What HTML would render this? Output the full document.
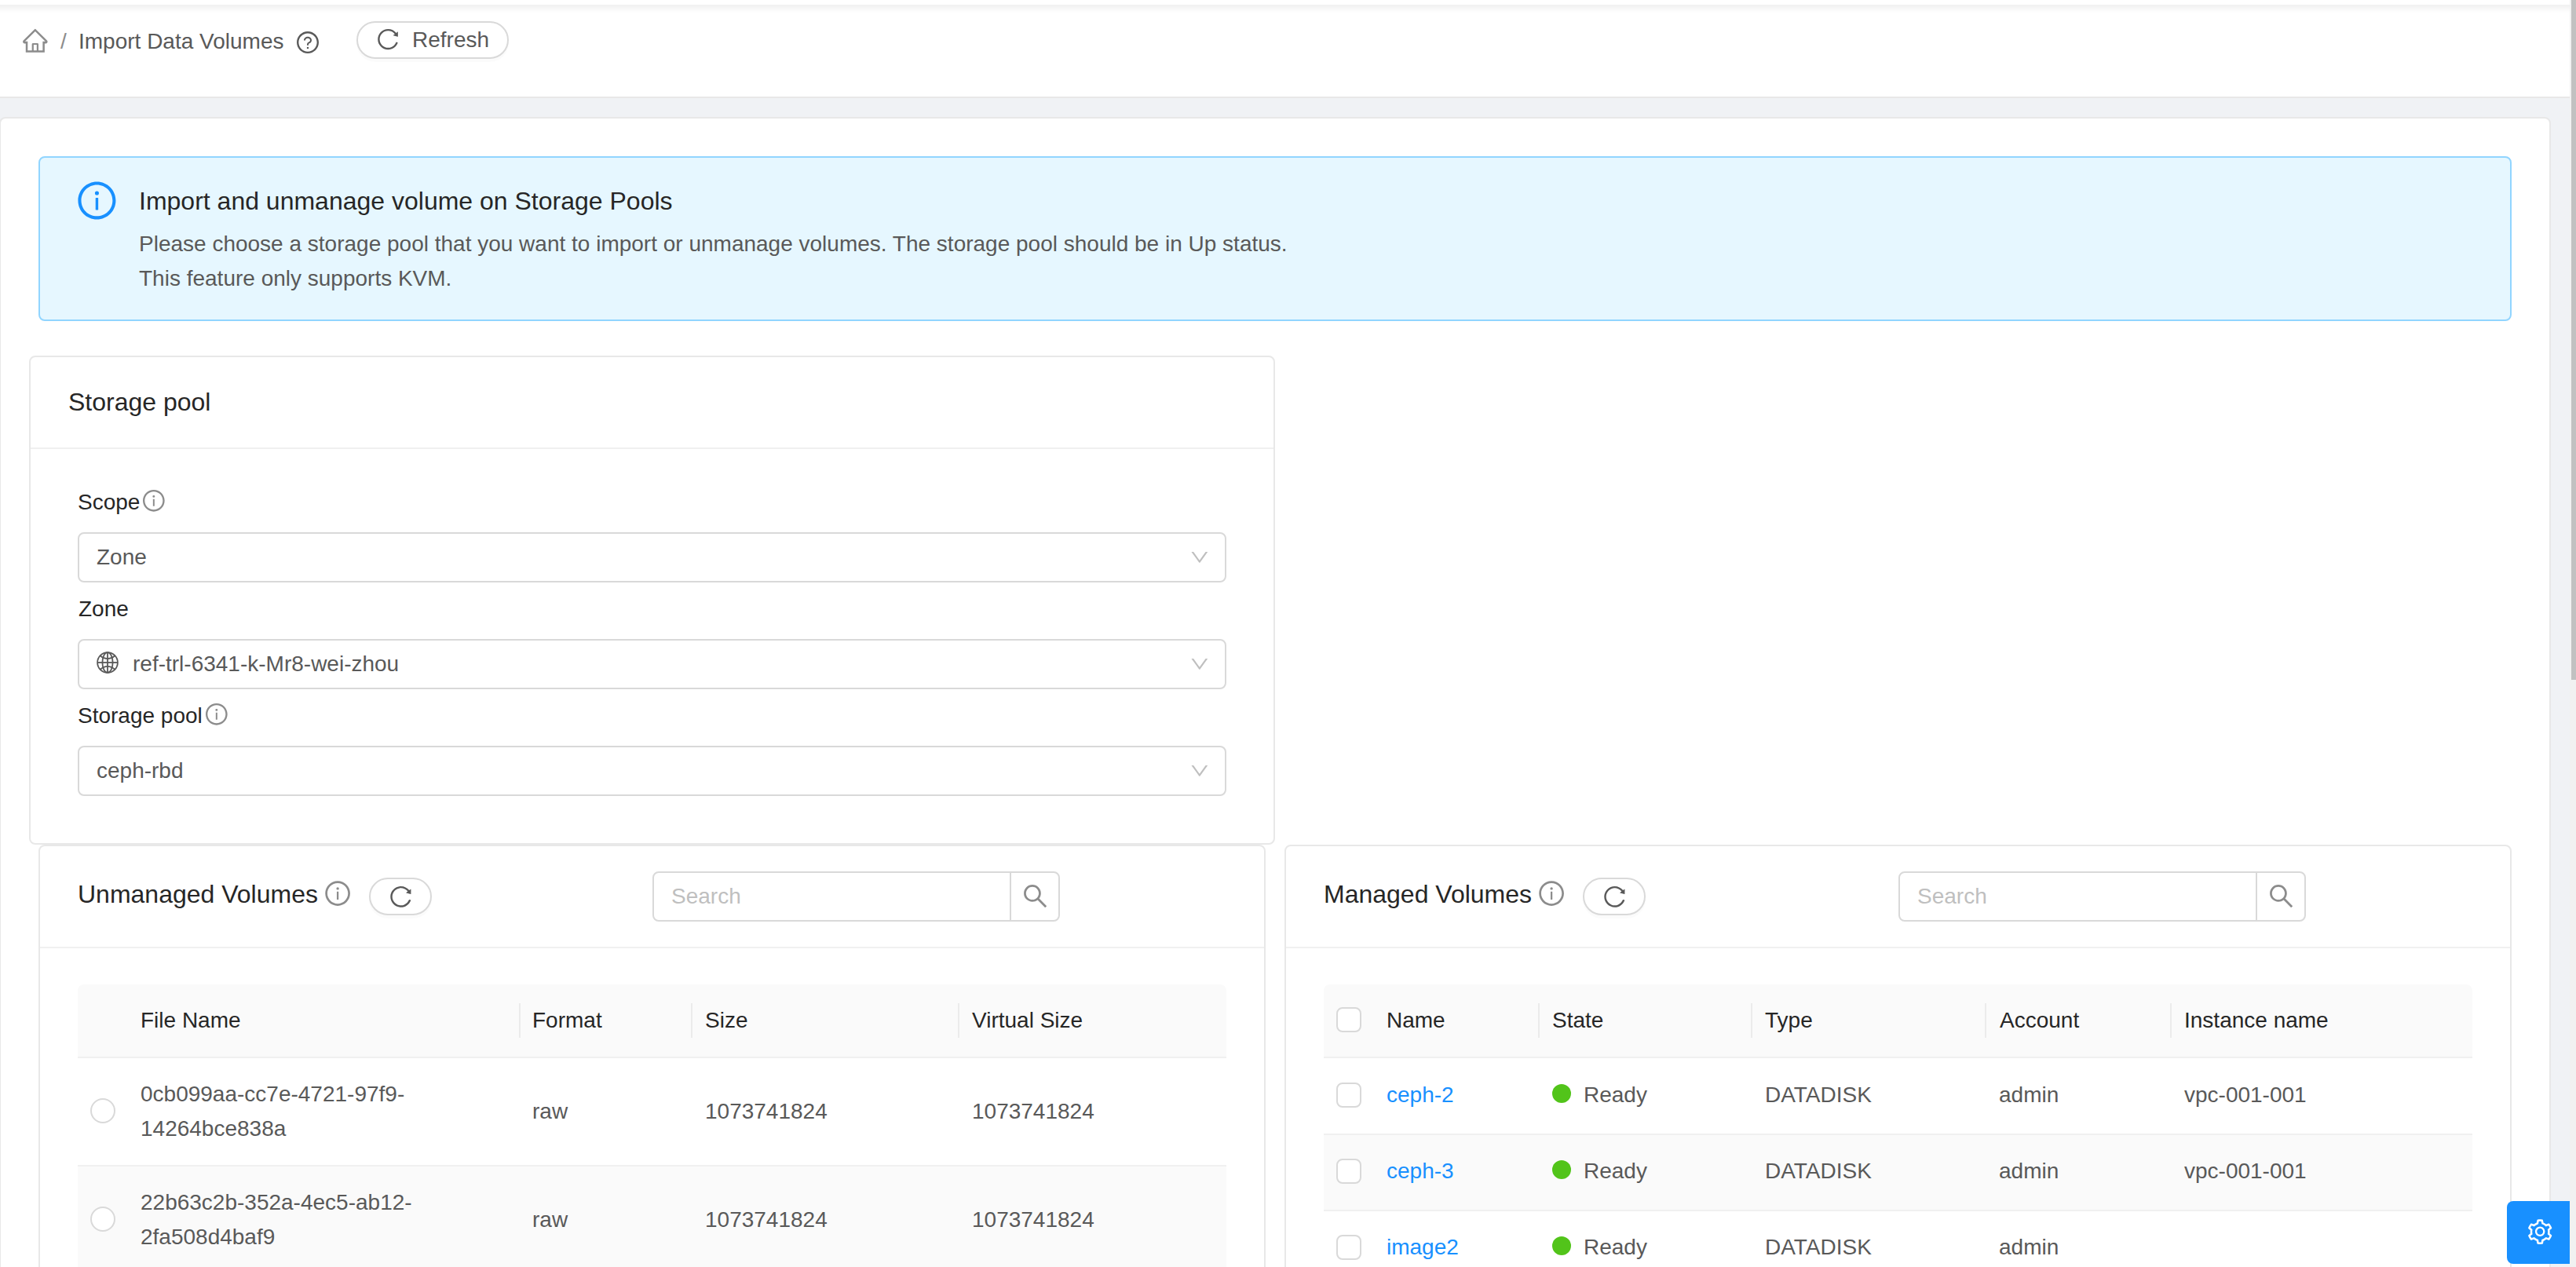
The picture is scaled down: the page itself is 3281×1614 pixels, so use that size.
<!DOCTYPE html>
<html><head><meta charset="utf-8"><style>html,body{margin:0;padding:0}
body{width:3281px;height:1614px;overflow:hidden;position:relative;background:#f0f2f5;font-family:"Liberation Sans",sans-serif}
.a{position:absolute;box-sizing:border-box}
.t{position:absolute;white-space:nowrap;font-size:28px;line-height:28px;color:#595959}
.t32{font-size:32px;line-height:32px;color:#262626}
.dk{color:#262626}
.lnk{color:#1890ff}
svg{position:absolute;display:block}
.sel{position:absolute;box-sizing:border-box;background:#fff;border:2px solid #d9d9d9;border-radius:8px}
.card{position:absolute;box-sizing:border-box;background:#fff;border:2px solid #e8e8e8;border-radius:8px}
.btnr{position:absolute;box-sizing:border-box;background:#fff;border:2px solid #d9d9d9;border-radius:24px;box-shadow:0 4px 0 rgba(0,0,0,.015)}
.chk{position:absolute;box-sizing:border-box;width:32px;height:32px;border:2px solid #d9d9d9;border-radius:8px;background:#fff}
.rad{position:absolute;box-sizing:border-box;width:32px;height:32px;border:2px solid #d9d9d9;border-radius:50%;background:#fff}
.dot{position:absolute;width:24px;height:24px;border-radius:50%;background:#52c41a}
</style></head><body>
<div class="a" style="left:0px;top:0px;width:3273px;height:125px;background:#fff;border-bottom:2px solid #e8e8e8"></div>
<div class="a" style="left:0px;top:6px;width:3273px;height:10px;background:linear-gradient(rgba(0,0,0,.06),rgba(0,0,0,0))"></div>
<svg style="left:26.9px;top:33.8px" width="35.65" height="35.65" viewBox="0 0 1024 1024" fill="#8c8c8c"><path d="M946.5 505L560.1 118.8l-25.9-25.9a31.5 31.5 0 0 0-44.4 0L77.5 505a63.9 63.9 0 0 0-18.8 46c.4 35.2 29.7 63.3 64.9 63.3h42.5V940h691.8V614.3h43.4c17.1 0 33.2-6.7 45.3-18.8a63.6 63.6 0 0 0 18.7-45.3c0-17-6.7-33.1-18.8-45.2zM568 868H456V664h112v204zm217.9-325.7V868H632V640c0-22.1-17.9-40-40-40H432c-22.1 0-40 17.9-40 40v228H238.1V542.3h-96l370-369.7 23.1 23.1L882 542.3h-96.1z"/></svg>
<div class="t" style="left:77px;top:39px;color:#8c8c8c;">/</div>
<div class="t" style="left:100px;top:38.5px;">Import Data Volumes</div>
<svg style="left:376.0px;top:38.0px" width="32.0" height="32.0" viewBox="0 0 1024 1024" fill="#595959"><path d="M512 64C264.6 64 64 264.6 64 512s200.6 448 448 448 448-200.6 448-448S759.4 64 512 64zm0 820c-205.4 0-372-166.6-372-372s166.6-372 372-372 372 166.6 372 372-166.6 372-372 372z"/><path d="M623.6 316.7C593.6 290.4 554 276 512 276s-81.6 14.5-111.6 40.7C369.2 344 352 380.7 352 420v7.6c0 4.4 3.6 8 8 8h48c4.4 0 8-3.6 8-8V420c0-44.1 43.1-80 96-80s96 35.9 96 80c0 31.1-22 59.6-56.1 72.7-21.2 8.1-39.2 22.3-52.1 40.9-13.1 19-19.9 41.8-19.9 64.9V620c0 4.4 3.6 8 8 8h48c4.4 0 8-3.6 8-8v-22.7a48.3 48.3 0 0 1 30.9-44.8c59-22.7 97.1-74.7 97.1-132.5.1-39.3-17.1-76-48.3-103.3zM472 732a40 40 0 1 0 80 0 40 40 0 1 0-80 0z"/></svg>
<div class="btnr" style="left:454px;top:27px;width:194px;height:48px"></div>
<svg style="left:477.8px;top:34.1px" width="32.08" height="32.08" viewBox="0 0 1024 1024" fill="#595959"><path d="M909.1 209.3l-56.4 44.1C775.8 155.1 656.2 92 521.9 92 290 92 102.3 279.5 102 511.5 101.7 743.7 289.8 932 521.9 932c181.3 0 335.8-115 394.6-276.1 1.5-4.2-.7-8.9-4.9-10.3l-56.7-19.5a8 8 0 0 0-10.1 4.8c-1.8 5-3.8 10-5.9 14.9-17.3 41-42.1 77.8-73.7 109.4A344.77 344.77 0 0 1 655.9 829c-42.3 17.900-87.4 27-133.8 27-46.5 0-91.5-9.1-133.8-27A341.5 341.5 0 0 1 279 755.2a342.16 342.16 0 0 1-73.7-109.4c-17.9-42.4-27-87.4-27-133.9s9.1-91.5 27-133.9c17.3-41 42.1-77.8 73.700-109.4 31.6-31.6 68.4-56.4 109.3-73.8 42.3-17.9 87.4-27 133.8-27 46.5 0 91.5 9.1 133.8 27a341.5 341.5 0 0 1 109.3 73.8c9.9 9.9 19.2 20.4 27.8 31.4l-60.2 47a8 8 0 0 0 3 14.1l175.6 43c5 1.2 9.9-2.6 9.9-7.7l.8-180.9c-.1-6.6-7.8-10.3-13-6.2z"/></svg>
<div class="t" style="left:525px;top:36.5px;">Refresh</div>
<div class="card" style="left:-1px;top:149px;width:3250px;height:1500px"></div>
<div class="a" style="left:49px;top:199px;width:3150px;height:210px;background:#e6f7ff;border:2px solid #91d5ff;border-radius:8px"></div>
<svg style="left:95.6px;top:227.6px" width="54.86" height="54.86" viewBox="0 0 1024 1024" fill="#1890ff"><path d="M512 64C264.6 64 64 264.6 64 512s200.6 448 448 448 448-200.6 448-448S759.4 64 512 64zm0 820c-205.4 0-372-166.6-372-372s166.6-372 372-372 372 166.6 372 372-166.6 372-372 372z"/><path d="M464 336a48 48 0 1 0 96 0 48 48 0 1 0-96 0zm72 112h-48c-4.4 0-8 3.6-8 8v272c0 4.4 3.6 8 8 8h48c4.4 0 8-3.6 8-8V456c0-4.4-3.6-8-8-8z"/></svg>
<div class="t t32" style="left:177px;top:240px;">Import and unmanage volume on Storage Pools</div>
<div class="t" style="left:177px;top:297px;">Please choose a storage pool that you want to import or unmanage volumes. The storage pool should be in Up status.</div>
<div class="t" style="left:177px;top:341px;">This feature only supports KVM.</div>
<div class="card" style="left:37px;top:453px;width:1587px;height:623px"></div>
<div class="a" style="left:39px;top:570px;width:1583px;height:2px;background:#f0f0f0"></div>
<div class="t t32" style="left:87px;top:496px;">Storage pool</div>
<div class="t dk" style="left:99px;top:626px;">Scope</div>
<svg style="left:180.2px;top:622.2px" width="31.66" height="31.66" viewBox="0 0 1024 1024" fill="#8c8c8c"><path d="M512 64C264.6 64 64 264.6 64 512s200.6 448 448 448 448-200.6 448-448S759.4 64 512 64zm0 820c-205.4 0-372-166.6-372-372s166.6-372 372-372 372 166.6 372 372-166.6 372-372 372z"/><path d="M464 336a48 48 0 1 0 96 0 48 48 0 1 0-96 0zm72 112h-48c-4.4 0-8 3.6-8 8v272c0 4.4 3.6 8 8 8h48c4.4 0 8-3.6 8-8V456c0-4.4-3.6-8-8-8z"/></svg>
<div class="sel" style="left:99px;top:678px;width:1463px;height:64px"></div>
<div class="t" style="left:123px;top:696px;">Zone</div>
<svg style="left:1513.9px;top:696.1px" width="27.69" height="27.69" viewBox="0 0 1024 1024" fill="#bfbfbf"><path d="M884 256h-75c-5.1 0-9.9 2.5-12.9 6.6L512 654.2 227.9 262.6c-3-4.1-7.8-6.6-12.9-6.6h-75c-6.5 0-10.3 7.4-6.5 12.7l352.6 486.1c12.8 17.6 39 17.6 51.7 0l352.6-486.1c3.9-5.3.1-12.7-6.4-12.7z"/></svg>
<div class="t dk" style="left:100px;top:762px;">Zone</div>
<div class="sel" style="left:99px;top:814px;width:1463px;height:64px"></div>
<svg style="left:123px;top:830px" width="28" height="28" viewBox="0 0 28 28" fill="none" stroke="#595959" stroke-width="1.8"><circle cx="14" cy="14" r="12.9"/><ellipse cx="14" cy="14" rx="6.6" ry="12.9"/><line x1="14" y1="1.1" x2="14" y2="26.9"/><line x1="1.1" y1="14" x2="26.9" y2="14"/><path d="M4.3 5 Q14 13.2 23.7 5M4.3 23 Q14 14.8 23.7 23"/></svg>
<div class="t" style="left:169px;top:832px;">ref-trl-6341-k-Mr8-wei-zhou</div>
<svg style="left:1513.9px;top:832.1px" width="27.69" height="27.69" viewBox="0 0 1024 1024" fill="#bfbfbf"><path d="M884 256h-75c-5.1 0-9.9 2.5-12.9 6.6L512 654.2 227.9 262.6c-3-4.1-7.8-6.6-12.9-6.6h-75c-6.5 0-10.3 7.4-6.5 12.7l352.6 486.1c12.8 17.6 39 17.6 51.7 0l352.6-486.1c3.9-5.3.1-12.7-6.4-12.7z"/></svg>
<div class="t dk" style="left:99px;top:898px;">Storage pool</div>
<svg style="left:260.2px;top:894.2px" width="31.66" height="31.66" viewBox="0 0 1024 1024" fill="#8c8c8c"><path d="M512 64C264.6 64 64 264.6 64 512s200.6 448 448 448 448-200.6 448-448S759.4 64 512 64zm0 820c-205.4 0-372-166.6-372-372s166.6-372 372-372 372 166.6 372 372-166.6 372-372 372z"/><path d="M464 336a48 48 0 1 0 96 0 48 48 0 1 0-96 0zm72 112h-48c-4.4 0-8 3.6-8 8v272c0 4.4 3.6 8 8 8h48c4.4 0 8-3.6 8-8V456c0-4.4-3.6-8-8-8z"/></svg>
<div class="sel" style="left:99px;top:950px;width:1463px;height:64px"></div>
<div class="t" style="left:123px;top:968px;">ceph-rbd</div>
<svg style="left:1513.9px;top:968.1px" width="27.69" height="27.69" viewBox="0 0 1024 1024" fill="#bfbfbf"><path d="M884 256h-75c-5.1 0-9.9 2.5-12.9 6.6L512 654.2 227.9 262.6c-3-4.1-7.8-6.6-12.9-6.6h-75c-6.5 0-10.3 7.4-6.5 12.7l352.6 486.1c12.8 17.6 39 17.6 51.7 0l352.6-486.1c3.9-5.3.1-12.7-6.4-12.7z"/></svg>
<div class="card" style="left:49px;top:1076px;width:1563px;height:600px"></div>
<div class="a" style="left:51px;top:1206px;width:1559px;height:2px;background:#f0f0f0"></div>
<div class="t t32" style="left:99px;top:1122.5px;">Unmanaged Volumes</div>
<svg style="left:411.9px;top:1119.9px" width="36.23" height="36.23" viewBox="0 0 1024 1024" fill="#8c8c8c"><path d="M512 64C264.6 64 64 264.6 64 512s200.6 448 448 448 448-200.6 448-448S759.4 64 512 64zm0 820c-205.4 0-372-166.6-372-372s166.6-372 372-372 372 166.6 372 372-166.6 372-372 372z"/><path d="M464 336a48 48 0 1 0 96 0 48 48 0 1 0-96 0zm72 112h-48c-4.4 0-8 3.6-8 8v272c0 4.4 3.6 8 8 8h48c4.4 0 8-3.6 8-8V456c0-4.4-3.6-8-8-8z"/></svg>
<div class="btnr" style="left:470px;top:1118px;width:80px;height:48px"></div>
<svg style="left:493.7px;top:1126.1px" width="32.71" height="32.71" viewBox="0 0 1024 1024" fill="#595959"><path d="M909.1 209.3l-56.4 44.1C775.8 155.1 656.2 92 521.9 92 290 92 102.3 279.5 102 511.5 101.7 743.7 289.8 932 521.9 932c181.3 0 335.8-115 394.6-276.1 1.5-4.2-.7-8.9-4.9-10.3l-56.7-19.5a8 8 0 0 0-10.1 4.8c-1.8 5-3.8 10-5.9 14.9-17.3 41-42.1 77.8-73.7 109.4A344.77 344.77 0 0 1 655.9 829c-42.3 17.900-87.4 27-133.8 27-46.5 0-91.5-9.1-133.8-27A341.5 341.5 0 0 1 279 755.2a342.16 342.16 0 0 1-73.7-109.4c-17.9-42.4-27-87.4-27-133.9s9.1-91.5 27-133.9c17.3-41 42.1-77.8 73.700-109.4 31.6-31.6 68.4-56.4 109.3-73.8 42.3-17.9 87.4-27 133.8-27 46.5 0 91.5 9.1 133.8 27a341.5 341.5 0 0 1 109.3 73.8c9.9 9.9 19.2 20.4 27.8 31.4l-60.2 47a8 8 0 0 0 3 14.1l175.6 43c5 1.2 9.9-2.6 9.9-7.7l.8-180.9c-.1-6.6-7.8-10.3-13-6.2z"/></svg>
<div class="sel" style="left:831px;top:1110px;width:519px;height:64px"></div>
<div class="a" style="left:1286px;top:1110px;width:2px;height:64px;background:#d9d9d9"></div>
<div class="t" style="left:855px;top:1127.5px;color:#bfbfbf;">Search</div>
<svg style="left:1299.9px;top:1122.9px" width="37.12" height="37.12" viewBox="0 0 1024 1024" fill="#8c8c8c"><path d="M909.6 854.5L649.9 594.8C690.2 542.7 712 479 712 412c0-80.2-31.3-155.4-87.900-212.1-56.6-56.7-132-87.9-212.1-87.9s-155.5 31.3-212.1 87.9C143.2 256.5 112 331.8 112 412c0 80.1 31.3 155.5 87.9 212.1C256.5 680.8 331.8 712 412 712c67 0 130.6-21.8 182.7-62l259.7 259.6a8.2 8.2 0 0 0 11.6 0l43.6-43.5a8.2 8.2 0 0 0 0-11.6zM570.4 570.4C528 612.7 471.8 636 412 636s-116-23.3-158.4-65.6C211.3 528 188 471.8 188 412s23.3-116.1 65.6-158.4C296 211.3 352.2 188 412 188s116.1 23.2 158.4 65.6S636 352.2 636 412s-23.3 116.1-65.6 158.4z"/></svg>
<div class="card" style="left:1636px;top:1076px;width:1563px;height:600px"></div>
<div class="a" style="left:1638px;top:1206px;width:1559px;height:2px;background:#f0f0f0"></div>
<div class="t t32" style="left:1686px;top:1122.5px;">Managed Volumes</div>
<svg style="left:1957.9px;top:1119.9px" width="36.23" height="36.23" viewBox="0 0 1024 1024" fill="#8c8c8c"><path d="M512 64C264.6 64 64 264.6 64 512s200.6 448 448 448 448-200.6 448-448S759.4 64 512 64zm0 820c-205.4 0-372-166.6-372-372s166.6-372 372-372 372 166.6 372 372-166.6 372-372 372z"/><path d="M464 336a48 48 0 1 0 96 0 48 48 0 1 0-96 0zm72 112h-48c-4.4 0-8 3.6-8 8v272c0 4.4 3.6 8 8 8h48c4.4 0 8-3.6 8-8V456c0-4.4-3.6-8-8-8z"/></svg>
<div class="btnr" style="left:2016px;top:1118px;width:80px;height:48px"></div>
<svg style="left:2039.7px;top:1126.1px" width="32.71" height="32.71" viewBox="0 0 1024 1024" fill="#595959"><path d="M909.1 209.3l-56.4 44.1C775.8 155.1 656.2 92 521.9 92 290 92 102.3 279.5 102 511.5 101.7 743.7 289.8 932 521.9 932c181.3 0 335.8-115 394.6-276.1 1.5-4.2-.7-8.9-4.9-10.3l-56.7-19.5a8 8 0 0 0-10.1 4.8c-1.8 5-3.8 10-5.9 14.9-17.3 41-42.1 77.8-73.7 109.4A344.77 344.77 0 0 1 655.9 829c-42.3 17.900-87.4 27-133.8 27-46.5 0-91.5-9.1-133.8-27A341.5 341.5 0 0 1 279 755.2a342.16 342.16 0 0 1-73.7-109.4c-17.9-42.4-27-87.4-27-133.9s9.1-91.5 27-133.9c17.3-41 42.1-77.8 73.700-109.4 31.6-31.6 68.4-56.4 109.3-73.8 42.3-17.9 87.4-27 133.8-27 46.5 0 91.5 9.1 133.8 27a341.5 341.5 0 0 1 109.3 73.8c9.9 9.9 19.2 20.4 27.8 31.4l-60.2 47a8 8 0 0 0 3 14.1l175.6 43c5 1.2 9.9-2.6 9.9-7.7l.8-180.9c-.1-6.6-7.8-10.3-13-6.2z"/></svg>
<div class="sel" style="left:2418px;top:1110px;width:519px;height:64px"></div>
<div class="a" style="left:2873px;top:1110px;width:2px;height:64px;background:#d9d9d9"></div>
<div class="t" style="left:2442px;top:1127.5px;color:#bfbfbf;">Search</div>
<svg style="left:2886.9px;top:1122.9px" width="37.12" height="37.12" viewBox="0 0 1024 1024" fill="#8c8c8c"><path d="M909.6 854.5L649.9 594.8C690.2 542.7 712 479 712 412c0-80.2-31.3-155.4-87.900-212.1-56.6-56.7-132-87.9-212.1-87.9s-155.5 31.3-212.1 87.9C143.2 256.5 112 331.8 112 412c0 80.1 31.3 155.5 87.9 212.1C256.5 680.8 331.8 712 412 712c67 0 130.6-21.8 182.7-62l259.7 259.6a8.2 8.2 0 0 0 11.6 0l43.6-43.5a8.2 8.2 0 0 0 0-11.6zM570.4 570.4C528 612.7 471.8 636 412 636s-116-23.3-158.4-65.6C211.3 528 188 471.8 188 412s23.3-116.1 65.6-158.4C296 211.3 352.2 188 412 188s116.1 23.2 158.4 65.6S636 352.2 636 412s-23.3 116.1-65.6 158.4z"/></svg>
<div class="a" style="left:99px;top:1254px;width:1463px;height:94px;background:#fafafa;border-bottom:2px solid #f0f0f0;border-radius:8px 8px 0 0"></div>
<div class="a" style="left:661px;top:1278px;width:2px;height:44px;background:#ebebeb"></div>
<div class="a" style="left:880px;top:1278px;width:2px;height:44px;background:#ebebeb"></div>
<div class="a" style="left:1220px;top:1278px;width:2px;height:44px;background:#ebebeb"></div>
<div class="t dk" style="left:179px;top:1286px;">File Name</div>
<div class="t dk" style="left:678px;top:1286px;">Format</div>
<div class="t dk" style="left:898px;top:1286px;">Size</div>
<div class="t dk" style="left:1238px;top:1286px;">Virtual Size</div>
<div class="a" style="left:99px;top:1484px;width:1463px;height:2px;background:#f0f0f0"></div>
<div class="a" style="left:99px;top:1486px;width:1463px;height:200px;background:#fafafa"></div>
<div class="rad" style="left:115px;top:1399px"></div>
<div class="t" style="left:179px;top:1380px;">0cb099aa-cc7e-4721-97f9-</div>
<div class="t" style="left:179px;top:1424px;">14264bce838a</div>
<div class="t" style="left:678px;top:1401.5px;">raw</div>
<div class="t" style="left:898px;top:1402px;">1073741824</div>
<div class="t" style="left:1238px;top:1402px;">1073741824</div>
<div class="rad" style="left:115px;top:1537px"></div>
<div class="t" style="left:179px;top:1517.5px;">22b63c2b-352a-4ec5-ab12-</div>
<div class="t" style="left:179px;top:1561.5px;">2fa508d4baf9</div>
<div class="t" style="left:678px;top:1540px;">raw</div>
<div class="t" style="left:898px;top:1540px;">1073741824</div>
<div class="t" style="left:1238px;top:1540px;">1073741824</div>
<div class="a" style="left:1686px;top:1254px;width:1463px;height:94px;background:#fafafa;border-bottom:2px solid #f0f0f0;border-radius:8px 8px 0 0"></div>
<div class="a" style="left:1959px;top:1278px;width:2px;height:44px;background:#ebebeb"></div>
<div class="a" style="left:2230px;top:1278px;width:2px;height:44px;background:#ebebeb"></div>
<div class="a" style="left:2528px;top:1278px;width:2px;height:44px;background:#ebebeb"></div>
<div class="a" style="left:2764px;top:1278px;width:2px;height:44px;background:#ebebeb"></div>
<div class="t dk" style="left:1766px;top:1286px;">Name</div>
<div class="t dk" style="left:1977px;top:1286px;">State</div>
<div class="t dk" style="left:2248px;top:1286px;">Type</div>
<div class="t dk" style="left:2547px;top:1286px;">Account</div>
<div class="t dk" style="left:2782px;top:1286px;">Instance name</div>
<div class="chk" style="left:1702px;top:1283px"></div>
<div class="a" style="left:1686px;top:1444px;width:1463px;height:2px;background:#f0f0f0"></div>
<div class="chk" style="left:1702px;top:1379px"></div>
<div class="t lnk" style="left:1766px;top:1381px;">ceph-2</div>
<div class="dot" style="left:1977px;top:1381px"></div>
<div class="t" style="left:2017px;top:1381px;">Ready</div>
<div class="t" style="left:2248px;top:1381px;">DATADISK</div>
<div class="t" style="left:2546px;top:1381px;">admin</div>
<div class="t" style="left:2782px;top:1381px;">vpc-001-001</div>
<div class="a" style="left:1686px;top:1446px;width:1463px;height:95px;background:#fafafa"></div>
<div class="a" style="left:1686px;top:1541px;width:1463px;height:2px;background:#f0f0f0"></div>
<div class="chk" style="left:1702px;top:1476px"></div>
<div class="t lnk" style="left:1766px;top:1478px;">ceph-3</div>
<div class="dot" style="left:1977px;top:1478px"></div>
<div class="t" style="left:2017px;top:1478px;">Ready</div>
<div class="t" style="left:2248px;top:1478px;">DATADISK</div>
<div class="t" style="left:2546px;top:1478px;">admin</div>
<div class="t" style="left:2782px;top:1478px;">vpc-001-001</div>
<div class="chk" style="left:1702px;top:1573px"></div>
<div class="t lnk" style="left:1766px;top:1575px;">image2</div>
<div class="dot" style="left:1977px;top:1575px"></div>
<div class="t" style="left:2017px;top:1575px;">Ready</div>
<div class="t" style="left:2248px;top:1575px;">DATADISK</div>
<div class="t" style="left:2546px;top:1575px;">admin</div>
<div class="a" style="left:3193px;top:1530px;width:80px;height:80px;background:#1890ff;border-radius:8px 0 0 8px"></div>
<svg style="left:3216.8px;top:1550.9px" width="36.36" height="36.36" viewBox="0 0 1024 1024" fill="#fff"><path d="M924.8 625.7l-65.5-56c3.1-19 4.7-38.4 4.7-57.8s-1.6-38.8-4.7-57.8l65.5-56a32.03 32.03 0 0 0 9.3-35.2l-.9-2.6a443.74 443.74 0 0 0-79.7-137.9l-1.8-2.1a32.12 32.12 0 0 0-35.1-9.5l-81.3 28.9c-30-24.6-63.5-44-99.7-57.6l-15.7-85a32.05 32.05 0 0 0-25.8-25.7l-2.7-.5c-52.1-9.4-106.9-9.4-159 0l-2.7.5a32.05 32.05 0 0 0-25.8 25.7l-15.8 85.4a351.86 351.86 0 0 0-99 57.4l-81.9-29.1a32 32 0 0 0-35.1 9.5l-1.8 2.1a446.02 446.02 0 0 0-79.7 137.9l-.9 2.6c-4.5 12.5-.8 26.5 9.3 35.2l66.3 56.6c-3.1 18.8-4.6 38-4.6 57.1 0 19.2 1.5 38.4 4.6 57.1L99 625.5a32.03 32.03 0 0 0-9.3 35.2l.9 2.6c18.1 50.4 44.9 96.9 79.7 137.9l1.8 2.1a32.12 32.12 0 0 0 35.1 9.5l81.9-29.1c29.8 24.5 63.1 43.9 99 57.4l15.8 85.4a32.05 32.05 0 0 0 25.8 25.7l2.7.5a449.4 449.4 0 0 0 159 0l2.7-.5a32.05 32.05 0 0 0 25.8-25.7l15.7-85a350 350 0 0 0 99.7-57.6l81.3 28.9a32 32 0 0 0 35.1-9.5l1.8-2.1c34.8-41.1 61.6-87.5 79.7-137.9l.9-2.6c4.5-12.3.8-26.3-9.3-35zM788.3 465.9c2.5 15.1 3.8 30.6 3.8 46.1s-1.3 31-3.8 46.1l-6.6 40.1 74.7 63.9a370.03 370.03 0 0 1-42.6 73.6L721 702.8l-31.4 25.8c-23.9 19.6-50.5 35-79.3 45.8l-38.1 14.3-17.9 97a377.5 377.5 0 0 1-85 0l-17.9-97.2-37.8-14.5c-28.5-10.8-55-26.2-78.7-45.7l-31.4-25.9-93.4 33.2c-17-22.9-31.2-47.6-42.6-73.6l75.5-64.5-6.5-40c-2.4-14.9-3.7-30.3-3.7-45.5 0-15.3 1.2-30.6 3.7-45.5l6.5-40-75.5-64.5c11.3-26.1 25.6-50.7 42.6-73.6l93.4 33.2 31.4-25.9c23.7-19.5 50.2-34.9 78.7-45.7l37.9-14.3 17.9-97.2c28.1-3.2 56.8-3.2 85 0l17.9 97 38.1 14.3c28.7 10.8 55.4 26.2 79.3 45.8l31.4 25.8 92.8-32.9c17 22.9 31.2 47.6 42.6 73.6L781.8 426l6.5 39.9zM512 326c-97.2 0-176 78.8-176 176s78.8 176 176 176 176-78.8 176-176-78.8-176-176-176zm79.2 255.2A111.6 111.6 0 0 1 512 614c-29.9 0-58-11.7-79.2-32.8A111.6 111.6 0 0 1 400 502c0-29.9 11.7-58 32.8-79.2C454 401.6 482.1 390 512 390c29.9 0 58 11.6 79.2 32.8A111.6 111.6 0 0 1 624 502c0 29.9-11.7 58-32.8 79.2z"/></svg>
<div class="a" style="left:3273px;top:0px;width:8px;height:1614px;background:#f1f1f1"></div>
<div class="a" style="left:3275px;top:0px;width:6px;height:866px;background:#c1c1c1"></div>
</body></html>
